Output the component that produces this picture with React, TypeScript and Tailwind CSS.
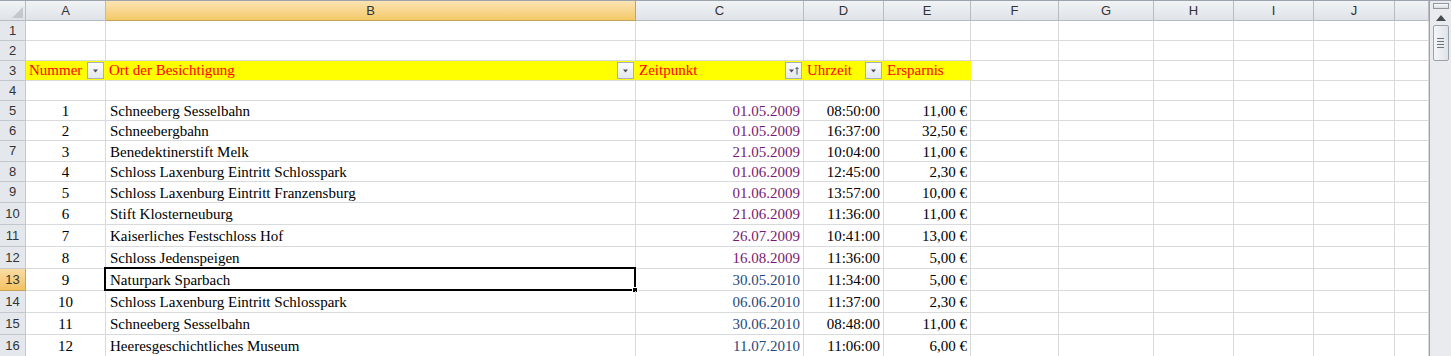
import React from 'react';

// column widths: row header, A..J, partial K
const COLW = [
  'w-[26px]',
  'w-[80px]',
  'w-[530px]',
  'w-[168px]',
  'w-[80px]',
  'w-[87px]',
  'w-[88px]',
  'w-[95px]',
  'w-[80px]',
  'w-[80px]',
  'w-[81px]',
  'w-[34px]',
];
const LETTERS = ['A', 'B', 'C', 'D', 'E', 'F', 'G', 'H', 'I', 'J', ''];

// row heights for rows 1..16
const ROWH = [
  'h-[20px]', 'h-[20px]', 'h-[20px]', 'h-[20px]', 'h-[20px]', 'h-[20px]', 'h-[21px]', 'h-[20px]',
  'h-[21px]', 'h-[22px]', 'h-[22px]', 'h-[22px]', 'h-[22px]', 'h-[22px]', 'h-[22px]', 'h-[22px]',
];

const data = [
  ['1', 'Schneeberg Sesselbahn', '01.05.2009', '08:50:00', '11,00 €'],
  ['2', 'Schneebergbahn', '01.05.2009', '16:37:00', '32,50 €'],
  ['3', 'Benedektinerstift Melk', '21.05.2009', '10:04:00', '11,00 €'],
  ['4', 'Schloss Laxenburg Eintritt Schlosspark', '01.06.2009', '12:45:00', '2,30 €'],
  ['5', 'Schloss Laxenburg Eintritt Franzensburg', '01.06.2009', '13:57:00', '10,00 €'],
  ['6', 'Stift Klosterneuburg', '21.06.2009', '11:36:00', '11,00 €'],
  ['7', 'Kaiserliches Festschloss Hof', '26.07.2009', '10:41:00', '13,00 €'],
  ['8', 'Schloss Jedenspeigen', '16.08.2009', '11:36:00', '5,00 €'],
  ['9', 'Naturpark Sparbach', '30.05.2010', '11:34:00', '5,00 €'],
  ['10', 'Schloss Laxenburg Eintritt Schlosspark', '06.06.2010', '11:37:00', '2,30 €'],
  ['11', 'Schneeberg Sesselbahn', '30.06.2010', '08:48:00', '11,00 €'],
  ['12', 'Heeresgeschichtliches Museum', '11.07.2010', '11:06:00', '6,00 €'],
];

const headers = ['Nummer', 'Ort der Besichtigung', 'Zeitpunkt', 'Uhrzeit', 'Ersparnis'];

function FilterButton({ sorted }: { sorted?: boolean }) {
  return (
    <span className="ml-auto mr-px flex h-[17px] w-[17px] shrink-0 items-center justify-center border border-[#a7afb8] bg-linear-to-b from-[#fbfcfd] to-[#e3e7eb]">
      <svg width="15" height="15" viewBox="0 0 15 15">
        {sorted ? (
          <>
            <path d="M3 6.5h5l-2.5 3z" fill="#4a4f55" />
            <path d="M11 4.5v7M9.5 6l1.5-1.5 1.5 1.5" stroke="#4a4f55" strokeWidth="1" fill="none" />
          </>
        ) : (
          <path d="M5 6.5h5L7.5 9.5z" fill="#4a4f55" />
        )}
      </svg>
    </span>
  );
}

function Cell({ col, className = '', children }: { col: number; className?: string; children?: React.ReactNode }) {
  return (
    <div className={`${COLW[col]} flex shrink-0 items-center border-r border-b border-[#d9dadb] ${className}`}>
      {children}
    </div>
  );
}

function RowHeader({ n, selected }: { n: number; selected?: boolean }) {
  return (
    <div
      className={`${COLW[0]} flex shrink-0 items-center justify-center border-r border-b font-['Liberation_Sans',sans-serif] text-[13px] text-[#333] ${
        selected
          ? 'border-[#c6a35a] bg-linear-to-b from-[#f9dca3] to-[#f2c25f]'
          : 'border-[#c3c8ce] bg-[#e4e8ed]'
      }`}
    >
      {n}
    </div>
  );
}

function Sheet() {
  return (
    <div className="flex flex-col font-['Liberation_Serif',serif] text-[15px] text-black">
      {/* column headers */}
      <div className="flex h-[21px] border-t border-[#9ba3ad] font-['Liberation_Sans',sans-serif] text-[13px] text-[#333]">
        <div className={`${COLW[0]} flex shrink-0 items-end justify-end border-r border-b border-[#b5bcc4] bg-linear-to-b from-[#f1f3f5] to-[#dfe3e8] p-[2px]`}>
          <svg width="11" height="11" viewBox="0 0 11 11">
            <path d="M11 0v11H0z" fill="#c4c8cd" />
          </svg>
        </div>
        {LETTERS.map((l, i) => (
          <div
            key={i}
            className={`${COLW[i + 1]} flex shrink-0 items-center justify-center border-r border-b ${
              i === 1
                ? 'border-[#c6a35a] bg-linear-to-b from-[#fbe3b2] to-[#f4c966]'
                : 'border-[#b5bcc4] bg-linear-to-b from-[#f1f3f5] to-[#dfe3e8]'
            }`}
          >
            {l}
          </div>
        ))}
      </div>

      {/* rows 1 and 2 */}
      {[1, 2].map((r) => (
        <div key={r} className={`flex ${ROWH[r - 1]}`}>
          <RowHeader n={r} />
          {LETTERS.map((_, i) => (
            <Cell key={i} col={i + 1} />
          ))}
        </div>
      ))}

      {/* row 3: table header */}
      <div className={`flex ${ROWH[2]}`}>
        <RowHeader n={3} />
        {headers.map((h, i) => (
          <Cell key={h} col={i + 1} className="border-r-[#ffff00] border-b-[#d9dadb] bg-[#ffff00] pl-[3px] text-[#ff0000]">
            <span className="whitespace-nowrap">{h}</span>
            {i < 4 && <FilterButton sorted={i === 2} />}
          </Cell>
        ))}
        {LETTERS.slice(5).map((_, i) => (
          <Cell key={i} col={i + 6} />
        ))}
      </div>

      {/* row 4 */}
      <div className={`flex ${ROWH[3]}`}>
        <RowHeader n={4} />
        {LETTERS.map((_, i) => (
          <Cell key={i} col={i + 1} />
        ))}
      </div>

      {/* data rows */}
      {data.map((d, idx) => {
        const r = idx + 5;
        const selected = r === 13;
        return (
          <div key={r} className={`flex ${ROWH[r - 1]}`}>
            <RowHeader n={r} selected={selected} />
            <Cell col={1} className="justify-center pt-[2px]">
              {d[0]}
            </Cell>
            <Cell col={2} className="relative pl-[4px] pt-[2px]">
              <span className="whitespace-nowrap">{d[1]}</span>
              {selected && (
                <span className="absolute -top-[2px] -left-[2px] -right-px -bottom-px border-2 border-black">
                  <span className="absolute -right-[4px] -bottom-[4px] h-[6px] w-[6px] border border-white bg-black" />
                </span>
              )}
            </Cell>
            <Cell col={3} className={`justify-end pr-[3px] pt-[2px] ${r >= 13 ? 'text-[#1f497d]' : 'text-[#7a1a72]'}`}>
              {d[2]}
            </Cell>
            <Cell col={4} className="justify-end pr-[3px] pt-[2px]">
              {d[3]}
            </Cell>
            <Cell col={5} className="justify-end pr-[3px] pt-[2px]">
              {d[4]}
            </Cell>
            {LETTERS.slice(5).map((_, i) => (
              <Cell key={i} col={i + 6} />
            ))}
          </div>
        );
      })}
    </div>
  );
}

function Scrollbar() {
  return (
    <div className="flex w-[22px] shrink-0 flex-col items-center border-t border-l border-[#9ba3ad] bg-[#e9ebee] pt-[2px]">
      <div className="h-[6px] w-[16px] border border-[#8f979f] bg-linear-to-b from-[#fafbfc] to-[#d8dde2]" />
      <div className="mt-[4px] flex h-[10px] items-center justify-center">
        <svg width="10" height="6" viewBox="0 0 10 6">
          <path d="M5 0l5 6H0z" fill="#454b52" />
        </svg>
      </div>
      <div className="mt-[2px] flex h-[36px] w-[16px] flex-col items-center justify-center gap-[2px] rounded-[2px] border border-[#9aa3ad] bg-linear-to-r from-[#f5f6f8] to-[#dfe3e8]">
        <span className="h-px w-[7px] bg-[#6d747c]" />
        <span className="h-px w-[7px] bg-[#6d747c]" />
        <span className="h-px w-[7px] bg-[#6d747c]" />
        <span className="h-px w-[7px] bg-[#6d747c]" />
      </div>
    </div>
  );
}

export default function App() {
  return (
    <div className="flex h-[356px] w-[1451px] overflow-hidden bg-white">
      <Sheet />
      <Scrollbar />
    </div>
  );
}
